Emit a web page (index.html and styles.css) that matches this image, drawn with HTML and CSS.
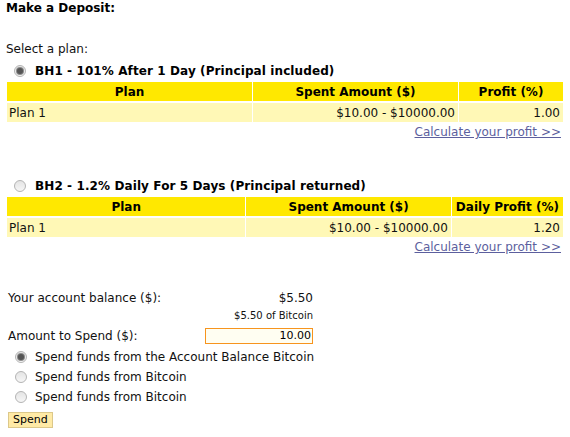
FILE: index.html
```html
<!DOCTYPE html>
<html>
<head>
<meta charset="utf-8">
<link rel="stylesheet" href="styles.css">
</head>
<body>
<div class="page">
  <div class="title">Make a Deposit:</div>
  <div class="select">Select a plan:</div>

  <div class="plan-name"><span class="radio checked"></span><b>BH1 - 101% After 1 Day (Principal included)</b></div>
  <table class="plan t1">
    <colgroup><col class="c1"><col class="c2"><col class="c3"></colgroup>
    <tr><th>Plan</th><th>Spent Amount ($)</th><th>Profit (%)</th></tr>
    <tr><td>Plan 1</td><td class="r">$10.00 - $10000.00</td><td class="r">1.00</td></tr>
  </table>
  <div class="calc"><a href="#">Calculate your profit &gt;&gt;</a></div>

  <div class="plan-name second"><span class="radio"></span><b>BH2 - 1.2% Daily For 5 Days (Principal returned)</b></div>
  <table class="plan t2">
    <colgroup><col class="c1"><col class="c2"><col class="c3"></colgroup>
    <tr><th>Plan</th><th>Spent Amount ($)</th><th>Daily Profit (%)</th></tr>
    <tr><td>Plan 1</td><td class="r">$10.00 - $10000.00</td><td class="r">1.20</td></tr>
  </table>
  <div class="calc"><a href="#">Calculate your profit &gt;&gt;</a></div>

  <div class="balance">
    <div class="row"><span>Your account balance ($):</span><span>$5.50</span></div>
    <div class="row small"><span></span><span>$5.50 of Bitcoin</span></div>
    <div class="row amount"><span>Amount to Spend ($):</span><span class="input">10.00</span></div>
  </div>
  <div class="opt"><span class="radio checked"></span>Spend funds from the Account Balance Bitcoin</div>
  <div class="opt"><span class="radio"></span>Spend funds from Bitcoin</div>
  <div class="opt"><span class="radio"></span>Spend funds from Bitcoin</div>
  <div class="btn-row"><span class="btn">Spend</span></div>
</div>
</body>
</html>
```

FILE: styles.css
```css
html, body {
  margin: 0;
  padding: 0;
  background: #fff;
}
body {
  font-family: "DejaVu Sans", Verdana, sans-serif;
  font-size: 12px;
  color: #111;
}
.page {
  padding: 0 6px;
}
.title {
  font-weight: bold;
  line-height: 16px;
  color: #000;
}
.select {
  margin-top: 25px;
  line-height: 16px;
}
.plan-name {
  margin-top: 6px;
  line-height: 16px;
  display: flex;
  align-items: center;
  color: #000;
}
.plan-name b {
  letter-spacing: 0.1px;
}
.plan-name.second {
  margin-top: 38px;
}
.plan-name .radio {
  margin-left: 8px;
  margin-right: 9px;
}
.radio {
  display: inline-block;
  box-sizing: border-box;
  width: 12px;
  height: 12px;
  border-radius: 50%;
  border: 1px solid #b4b4b4;
  background: linear-gradient(#e4e4e4, #f6f6f6);
  position: relative;
  flex: none;
}
.radio.checked::after {
  content: "";
  position: absolute;
  left: 2px;
  top: 2px;
  width: 6px;
  height: 6px;
  border-radius: 50%;
  background: #555;
  box-shadow: 0 0 0 1px #8a8a8a;
}
table.plan {
  margin-top: 1px;
  border-collapse: separate;
  border-spacing: 1px 2px;
  table-layout: fixed;
  width: 558px;
}
.t1 .c1 { width: 245px; }
.t1 .c2 { width: 205px; }
.t1 .c3 { width: 104px; }
.t2 .c1 { width: 238px; }
.t2 .c2 { width: 204px; }
.t2 .c3 { width: 111px; }
table.plan th {
  background: #ffe800;
  font-weight: bold;
  color: #000;
  height: 19px;
  padding: 0 2px;
  text-align: center;
  white-space: nowrap;
}
table.plan td {
  background: #fff8b6;
  height: 19px;
  padding: 0 2px;
  white-space: nowrap;
}
table.plan td.r {
  text-align: right;
  padding-right: 3px;
}
.calc {
  width: 555px;
  text-align: right;
  line-height: 16px;
  margin-top: 0;
}
.calc a {
  color: #5c5f9e;
  text-decoration: underline;
}
.balance {
  width: 307px;
  margin-top: 35px;
}
.balance .row {
  display: flex;
  justify-content: space-between;
  align-items: center;
  padding-left: 2px;
  line-height: 16px;
}
.balance .row.small {
  font-size: 10px;
  line-height: 14px;
  margin-top: 3px;
}
.balance .row.amount {
  margin-top: 4px;
  height: 18px;
}
.input {
  box-sizing: border-box;
  width: 108px;
  height: 16px;
  line-height: 14px;
  border: 1px solid #f7941d;
  background: #fffef2;
  font-size: 11px;
  text-align: right;
  padding-right: 1px;
  color: #000;
}
.opt {
  display: flex;
  align-items: center;
  height: 20px;
  line-height: 16px;
}
.balance + .opt {
  margin-top: 2px;
}
.opt .radio {
  margin-left: 9px;
  margin-right: 8px;
}
.btn-row {
  margin-top: 5px;
  padding-left: 2px;
}
.btn {
  display: inline-block;
  box-sizing: border-box;
  height: 16px;
  line-height: 14px;
  padding: 0 4px;
  font-size: 11px;
  background: #ffeaa6;
  border: 1px solid #dcc88a;
  color: #000;
}
```
